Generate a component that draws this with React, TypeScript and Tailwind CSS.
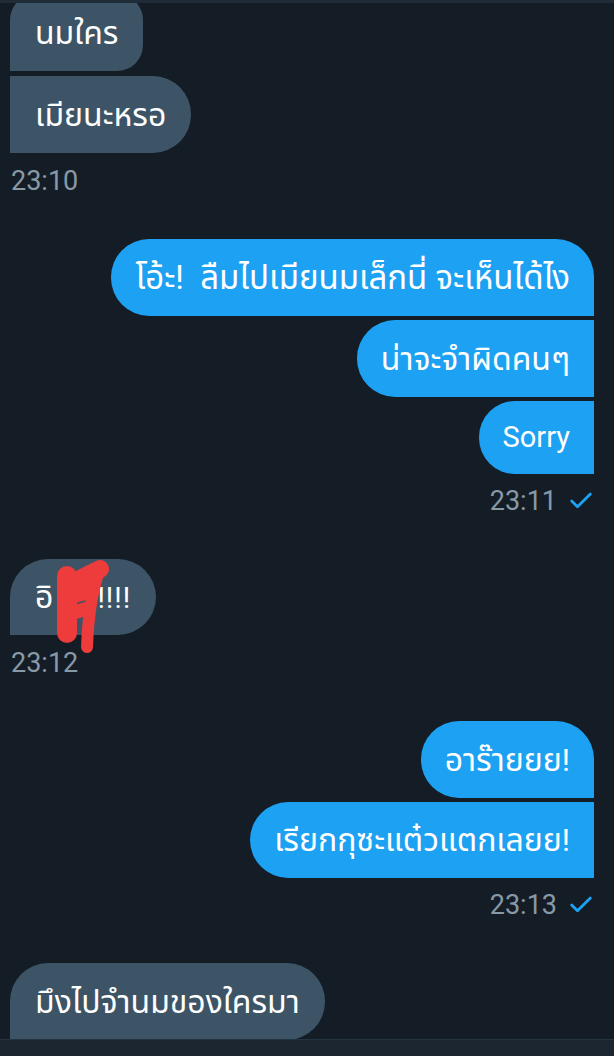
import React from "react";
import { Check } from "lucide-react";

type Msg = { children: React.ReactNode; round: string; h?: string; size?: string };

const fontStack = "font-['Roboto','Noto_Sans','Noto_Sans_Thai','Noto_Sans_Thai_UI','Loma','Garuda',sans-serif]";

function Incoming({ children, round, h = "h-[77px]", size = "text-[32px]" }: Msg) {
  return (
    <div className="flex justify-start pl-[10px]">
      <div className={`bg-[#3d5466] text-white ${size} ${h} flex items-center px-[25px] ${round}`}>
        <span className="whitespace-pre">{children}</span>
      </div>
    </div>
  );
}

function Outgoing({ children, round, h = "h-[77px]", size = "text-[32px]" }: Msg) {
  return (
    <div className="flex justify-end pr-[20px]">
      <div className={`bg-[#1da1f2] text-white ${size} ${h} flex items-center px-[24px] ${round}`}>
        <span className="whitespace-pre">{children}</span>
      </div>
    </div>
  );
}

function TimeLeft({ t }: { t: string }) {
  return (
    <div className="pl-[11px] mt-[13px] mb-[42px] h-[30px] flex items-center text-[27px] text-[#8899a6]">
      {t}
    </div>
  );
}

function TimeRight({ t }: { t: string }) {
  return (
    <div className="pr-[19px] mt-[12px] mb-[42px] h-[30px] flex items-center justify-end gap-[10px] text-[27px] text-[#8899a6]">
      <span>{t}</span>
      <Check className="w-[28px] h-[28px] text-[#1da1f2]" strokeWidth={2.4} />
    </div>
  );
}

export default function App() {
  return (
    <div className={`w-[614px] h-[1056px] bg-[#141d26] flex flex-col overflow-hidden ${fontStack}`}>
      <div className="h-[3px] bg-[#1f2b36] shrink-0" />

      <div className="flex-1 overflow-hidden">
        <div className="-mt-[9px] flex flex-col">
          {/* first incoming group */}
          <div className="flex flex-col gap-[5px]">
            <Incoming round="rounded-tl-[26px] rounded-r-[26px]">นมใคร</Incoming>
            <Incoming round="rounded-r-[38px]">เมียนะหรอ</Incoming>
          </div>
          <TimeLeft t="23:10" />

          {/* outgoing group */}
          <div className="flex flex-col gap-[4px] mt-[1px]">
            <Outgoing round="rounded-l-[38px] rounded-tr-[38px]" size="text-[33px]">{"โอ้ะ!  ลืมไปเมียนมเล็กนี่ จะเห็นได้ไง"}</Outgoing>
            <Outgoing round="rounded-l-[38px]">น่าจะจำผิดคนๆ</Outgoing>
            <Outgoing round="rounded-l-[36px]" h="h-[73px]" size="text-[29px]">Sorry</Outgoing>
          </div>
          <TimeRight t="23:11" />

          {/* censored incoming */}
          <div className="relative mt-[1px]">
            <Incoming round="rounded-t-[38px] rounded-br-[38px]" h="h-[76px]">
              อิ<span className="inline-block w-[44px]" /><span className="text-[29px] tracking-[1px]">!!!!</span>
            </Incoming>
            <svg className="absolute left-0 top-0" width="140" height="110" viewBox="0 0 140 110" fill="none">
              <g stroke="#ee3b3b" strokeLinecap="round" strokeLinejoin="round">
                <path d="M67 17 L67 74" strokeWidth="20" />
                <path d="M80 20 L100 10" strokeWidth="18" />
                <path d="M99 12 C92 32, 88 60, 87 88" strokeWidth="12" />
                <path d="M70 35 L88 30" strokeWidth="20" />
                <path d="M68 55 L86 50" strokeWidth="14" />
              </g>
            </svg>
          </div>
          <TimeLeft t="23:12" />

          {/* outgoing group */}
          <div className="flex flex-col gap-[4px] mt-[1px]">
            <Outgoing round="rounded-l-[38px] rounded-tr-[38px]">อาร๊ายยย!</Outgoing>
            <Outgoing round="rounded-l-[38px]" h="h-[76px]">เรียกกุซะแต๋วแตกเลยย!</Outgoing>
          </div>
          <TimeRight t="23:13" />

          <div className="mt-[1px]">
            <Incoming round="rounded-t-[38px] rounded-br-[38px]">มึงไปจำนมของใครมา</Incoming>
          </div>
        </div>
      </div>

      <div className="h-[17px] shrink-0 bg-[#1b2630] border-t border-[#243340]" />
    </div>
  );
}
